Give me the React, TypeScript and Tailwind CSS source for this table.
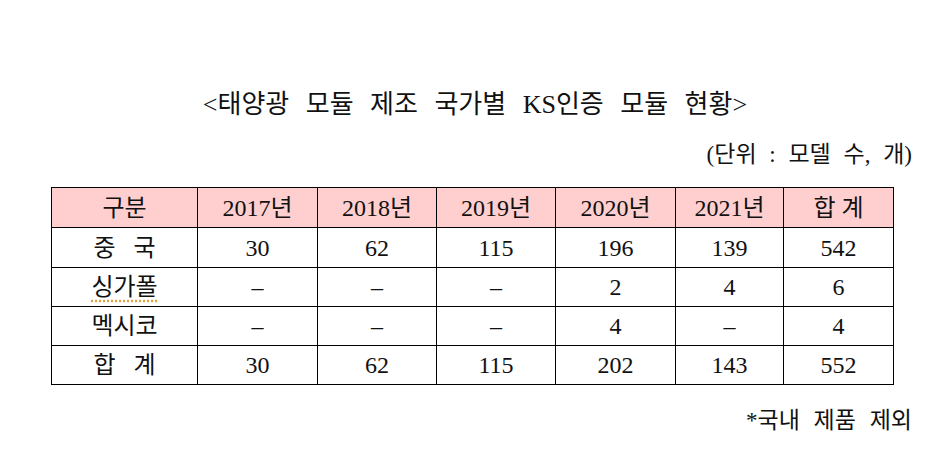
import * as React from "react";

const FONT = "font-['Liberation_Serif','Noto_Sans_CJK_KR',serif]";

const header = ["구분", "2017년", "2018년", "2019년", "2020년", "2021년", "합 계"];

const rows: { label: React.ReactNode; values: string[] }[] = [
	{ label: "중   국", values: ["30", "62", "115", "196", "139", "542"] },
	{
		label: <span className="underline decoration-dotted decoration-[#e5a03c] underline-offset-[5px]">싱가폴</span>,
		values: ["–", "–", "–", "2", "4", "6"],
	},
	{ label: "멕시코", values: ["–", "–", "–", "4", "–", "4"] },
	{ label: "합   계", values: ["30", "62", "115", "202", "143", "552"] },
];

const widths = [146, 120, 119, 119, 120, 108, 110];

export default function App() {
	return (
		<div className={`w-[948px] h-[470px] bg-white text-[#111] ${FONT} pt-[89px]`}>
			<h1 className="text-center text-[26px] leading-[32px] pl-[2px] [word-spacing:10px]">
				&lt;태양광 모듈 제조 국가별 KS인증 모듈 현황&gt;
			</h1>

			<div className="mt-[20px] pr-[36px] text-right text-[23px] leading-[28px] [word-spacing:7px]">
				(단위 : 모델 수, 개)
			</div>

			<table className="mt-[18px] ml-[51px] w-[842px] table-fixed border-collapse text-[24px]">
				<colgroup>
					{widths.map((w, i) => (
						<col key={i} style={{ width: w }} />
					))}
				</colgroup>
				<thead>
					<tr className="h-[40px] bg-[#ffcfcf]">
						{header.map((h) => (
							<th key={h} className="border border-black font-normal text-center whitespace-pre leading-none">
								{h}
							</th>
						))}
					</tr>
				</thead>
				<tbody>
					{rows.map((r, i) => (
						<tr key={i} className={i === 0 ? "h-[40px]" : "h-[39px]"}>
							<td className="border border-black text-center whitespace-pre leading-none">{r.label}</td>
							{r.values.map((v, j) => (
								<td key={j} className="border border-black text-center leading-none">
									{v}
								</td>
							))}
						</tr>
					))}
				</tbody>
			</table>

			<div className="mt-[22px] pr-[36px] text-right text-[23px] leading-[28px] [word-spacing:8px]">
				*국내 제품 제외
			</div>
		</div>
	);
}
